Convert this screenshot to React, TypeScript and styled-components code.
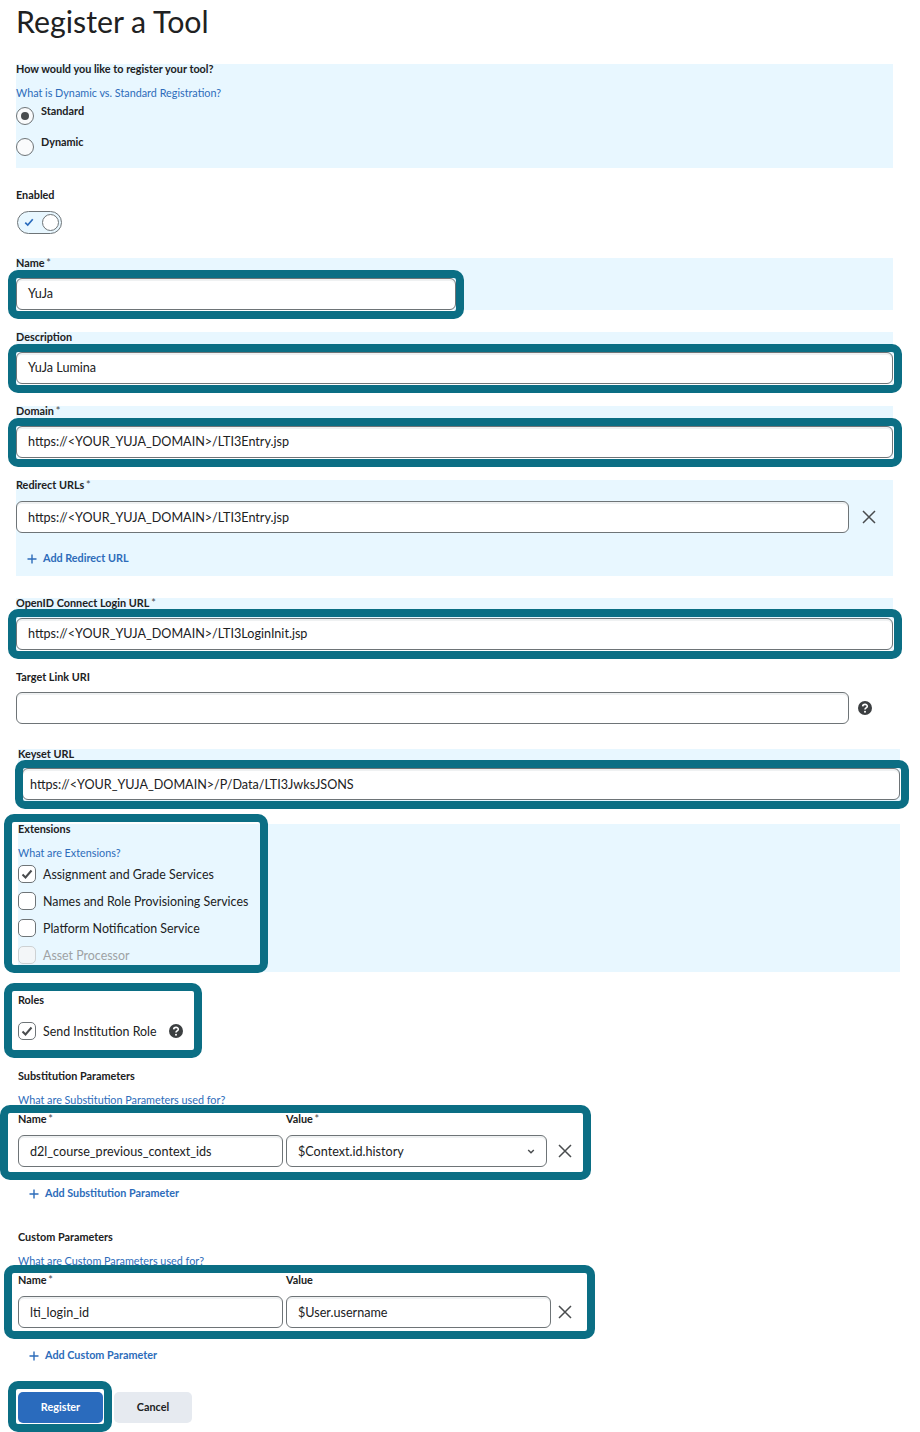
import { ReactNode } from 'react'
import styled, { createGlobalStyle, css } from 'styled-components'

const GlobalStyle = createGlobalStyle`
  body {
    margin: 0;
    background: #fff;
    font-family: Lato, "Open Sans", sans-serif;
    color: #202122;
  }
`

const Page = styled.main`
  width: 920px;
  height: 1432px;
  padding-left: 16px;
  box-sizing: border-box;
  overflow: hidden;
`

const Title = styled.h1`
  margin: 0 0 22px;
  font-size: 30.3px;
  font-weight: 400;
  line-height: 42px;
`

const Block = styled.section<{ $top: number; $height?: number; $tint?: boolean; $wide?: boolean }>`
  margin-top: ${(p) => p.$top}px;
  margin-left: ${(p) => (p.$wide ? 2 : 0)}px;
  width: ${(p) => (p.$wide ? 882 : 877)}px;
  height: ${(p) => (p.$height ? `${p.$height}px` : 'auto')};
  background: ${(p) => (p.$tint ? '#e8f7ff' : 'transparent')};
`

const Label = styled.div`
  padding-bottom: 2px;
  font-size: 10.85px;
  font-weight: 700;
  line-height: 10px;
  color: #202122;
  white-space: nowrap;
`

const Star = styled.span`
  margin-left: -1px;
  font-weight: 400;
  color: #494c4e;
`

const HelpLink = styled.a<{ $top: number }>`
  display: block;
  margin-top: ${(p) => p.$top}px;
  font-size: 10.8px;
  line-height: 14px;
  color: #2d6cba;
  white-space: nowrap;
`

const RadioRow = styled.div<{ $top: number }>`
  display: flex;
  gap: 7px;
  margin-top: ${(p) => p.$top}px;
  height: 18px;
`

const RadioCircle = styled.span<{ $on?: boolean }>`
  display: flex;
  align-items: center;
  justify-content: center;
  margin-top: 1px;
  width: 18px;
  height: 18px;
  box-sizing: border-box;
  border: 1px solid #6e7477;
  border-radius: 50%;
  background: #fafbfc;

  &::after {
    content: '';
    display: ${(p) => (p.$on ? 'block' : 'none')};
    width: 8px;
    height: 8px;
    border-radius: 50%;
    background: #494c4e;
  }
`

const Toggle = styled.div`
  display: flex;
  align-items: center;
  justify-content: space-between;
  margin: 9px 0 0 1px;
  padding: 0 2px 0 6px;
  width: 45px;
  height: 23px;
  box-sizing: border-box;
  border: 1px solid #6e7477;
  border-radius: 12px;
  background: #e8f7ff;
`

const Knob = styled.span`
  width: 17px;
  height: 17px;
  box-sizing: border-box;
  border: 1px solid #6e7477;
  border-radius: 50%;
  background: #fff;
`

// the teal annotation frame drawn over a part of the form
const frame = css<{ $inset: string }>`
  position: relative;

  &::after {
    content: '';
    position: absolute;
    inset: ${(p) => p.$inset};
    border: 8px solid #0b6e84;
    border-radius: 10px;
    pointer-events: none;
  }
`

const FieldRow = styled.div<{ $top?: number; $left?: number }>`
  display: flex;
  align-items: center;
  width: max-content;
  margin-top: ${(p) => p.$top ?? 8}px;
  margin-left: ${(p) => p.$left ?? 0}px;
`

const FramedRow = styled(FieldRow)<{ $inset: string }>`
  ${frame}
`

const FramedPanel = styled.div<{ $inset: string; $width: number; $height: number }>`
  ${frame}
  width: ${(p) => p.$width}px;
  height: ${(p) => p.$height}px;
`

const TextBox = styled.div<{ $width: number; $pad?: number; $raised?: boolean }>`
  display: flex;
  align-items: center;
  justify-content: space-between;
  flex: none;
  width: ${(p) => p.$width}px;
  height: 32px;
  padding: 0 11px ${(p) => (p.$raised ? 1 : 0)}px ${(p) => p.$pad ?? 11}px;
  box-sizing: border-box;
  border: 1px solid #6e7477;
  border-radius: 6px;
  background: #fff;
  box-shadow: inset 0 2px 0 0 rgba(177, 185, 190, 0.2);
  font-size: 12.6px;
  color: #202122;
  white-space: nowrap;
`

const IconSlot = styled.span<{ $width: number }>`
  display: flex;
  align-items: center;
  justify-content: center;
  flex: none;
  width: ${(p) => p.$width}px;
`

const AddButton = styled.a<{ $top: number }>`
  display: flex;
  align-items: center;
  gap: 6px;
  margin-top: ${(p) => p.$top}px;
  margin-left: 11px;
  font-size: 10.8px;
  font-weight: 700;
  line-height: 14px;
  color: #2d6cba;

  svg {
    margin-top: 2px;
  }
`

const CheckRow = styled.div<{ $top: number; $muted?: boolean }>`
  display: flex;
  align-items: center;
  gap: 7px;
  margin-top: ${(p) => p.$top}px;
  height: 18px;
  font-size: 12.4px;
  color: ${(p) => (p.$muted ? '#9ea2a4' : '#202122')};
  white-space: nowrap;
`

const CheckBox = styled.span<{ $muted?: boolean }>`
  display: flex;
  align-items: center;
  justify-content: center;
  width: 18px;
  height: 18px;
  box-sizing: border-box;
  border: 1px solid ${(p) => (p.$muted ? '#cdd1d3' : '#6e7477')};
  border-radius: 5px;
  background: ${(p) => (p.$muted ? '#f3f6f8' : '#fff')};
`

const ParamGrid = styled.div<{ $inset: string; $value: number; $remove: number }>`
  ${frame}
  display: grid;
  grid-template-columns: 265px ${(p) => p.$value}px ${(p) => p.$remove}px;
  column-gap: 3px;
  row-gap: 9px;
  align-items: center;
  margin-top: 7px;
  width: max-content;
`

const Actions = styled.div`
  display: flex;
  gap: 11px;
  margin: 30px 0 0 2px;
`

const ActionButton = styled.button<{ $primary?: boolean }>`
  width: ${(p) => (p.$primary ? 85 : 78)}px;
  height: 31px;
  padding: 0 0 3px;
  border: 0;
  border-radius: 5px;
  background: ${(p) => (p.$primary ? '#2a6bbd' : '#e6eaf0')};
  color: ${(p) => (p.$primary ? '#fff' : '#202122')};
  font-family: inherit;
  font-size: 10.8px;
  font-weight: 700;
`

const FramedAction = styled.div<{ $inset: string }>`
  ${frame}
  display: flex;
`

function CloseIcon() {
  return (
    <svg width="14" height="14" viewBox="0 0 14 14" fill="none" stroke="#494c4e" strokeWidth="1.5">
      <path d="M1 1 L13 13 M13 1 L1 13" />
    </svg>
  )
}

function HelpIcon() {
  return (
    <svg width="14" height="14" viewBox="0 0 14 14">
      <circle cx="7" cy="7" r="7" fill="#3c3f41" />
      <path d="M4.7 5.4 C4.8 2.7 9.3 2.7 9.3 5.3 C9.3 6.9 7 6.9 7 8.5" fill="none" stroke="#fff" strokeWidth="1.6" />
      <circle cx="7" cy="10.8" r="1" fill="#fff" />
    </svg>
  )
}

function PlusIcon() {
  return (
    <svg width="10" height="10" viewBox="0 0 10 10" stroke="#2d6cba" strokeWidth="1.4">
      <path d="M5 0.5 V9.5 M0.5 5 H9.5" />
    </svg>
  )
}

function CheckMark({ color = '#494c4e', size = 12 }: { color?: string; size?: number }) {
  return (
    <svg width={size} height={(size * 10) / 12} viewBox="0 0 12 10" fill="none" stroke={color} strokeWidth="2">
      <path d="M1.5 5.5 L4.5 8.5 L10.5 1.5" />
    </svg>
  )
}

function Chevron() {
  return (
    <svg width="8" height="5" viewBox="0 0 10 6" fill="none" stroke="#494c4e" strokeWidth="1.8">
      <path d="M1.5 1 L5 4.5 L8.5 1" />
    </svg>
  )
}

function Check({ top, on, muted, children }: { top: number; on?: boolean; muted?: boolean; children: ReactNode }) {
  return (
    <CheckRow $top={top} $muted={muted}>
      <CheckBox $muted={muted}>{on && <CheckMark />}</CheckBox>
      {children}
    </CheckRow>
  )
}

const required = <Star> *</Star>

export default function App() {
  return (
    <Page>
      <GlobalStyle />
      <Title>Register a Tool</Title>

      <Block $top={0} $height={104} $tint>
        <Label>How would you like to register your tool?</Label>
        <HelpLink $top={10}>What is Dynamic vs. Standard Registration?</HelpLink>
        <RadioRow $top={6}>
          <RadioCircle $on />
          <Label>Standard</Label>
        </RadioRow>
        <RadioRow $top={13}>
          <RadioCircle />
          <Label>Dynamic</Label>
        </RadioRow>
      </Block>

      <Block $top={22}>
        <Label>Enabled</Label>
        <Toggle>
          <CheckMark color="#2a6bbd" size={10} />
          <Knob />
        </Toggle>
      </Block>

      <Block $top={24} $height={52} $tint>
        <Label>Name{required}</Label>
        <FramedRow $inset="-8px -8px -9px -8px">
          <TextBox $width={440} $raised>
            YuJa
          </TextBox>
        </FramedRow>
      </Block>

      <Block $top={22} $height={52} $tint>
        <Label>Description</Label>
        <FramedRow $inset="-8.5px -9px -8.5px -8px">
          <TextBox $width={877} $raised>
            YuJa Lumina
          </TextBox>
        </FramedRow>
      </Block>

      <Block $top={22} $height={52} $tint>
        <Label>Domain{required}</Label>
        <FramedRow $inset="-8.5px -9px -8.5px -8px">
          <TextBox $width={877} $raised>
            {'https://<YOUR_YUJA_DOMAIN>/LTI3Entry.jsp'}
          </TextBox>
        </FramedRow>
      </Block>

      <Block $top={22} $height={96} $tint>
        <Label>Redirect URLs{required}</Label>
        <FieldRow $top={9}>
          <TextBox $width={833}>{'https://<YOUR_YUJA_DOMAIN>/LTI3Entry.jsp'}</TextBox>
          <IconSlot $width={39}>
            <CloseIcon />
          </IconSlot>
        </FieldRow>
        <AddButton $top={18}>
          <PlusIcon />
          Add Redirect URL
        </AddButton>
      </Block>

      <Block $top={22} $height={52} $tint>
        <Label>OpenID Connect Login URL{required}</Label>
        <FramedRow $inset="-9px -9px -9px -8px">
          <TextBox $width={877} $raised>
            {'https://<YOUR_YUJA_DOMAIN>/LTI3LoginInit.jsp'}
          </TextBox>
        </FramedRow>
      </Block>

      <Block $top={22}>
        <Label>Target Link URI</Label>
        <FieldRow>
          <TextBox $width={833} />
          <IconSlot $width={32}>
            <HelpIcon />
          </IconSlot>
        </FieldRow>
      </Block>

      <Block $top={25} $height={52} $tint $wide>
        <Label>Keyset URL</Label>
        <FramedRow $top={7} $left={4} $inset="-8px -9px -9px -7px">
          <TextBox $width={878} $pad={7}>
            {'https://<YOUR_YUJA_DOMAIN>/P/Data/LTI3JwksJSONS'}
          </TextBox>
        </FramedRow>
      </Block>

      <Block $top={23} $height={148} $tint $wide>
        <FramedPanel $width={250} $height={148} $inset="-10px 0 -1px -14px">
          <Label>Extensions</Label>
          <HelpLink $top={10}>What are Extensions?</HelpLink>
          <Check top={5} on>
            Assignment and Grade Services
          </Check>
          <Check top={9}>Names and Role Provisioning Services</Check>
          <Check top={9}>Platform Notification Service</Check>
          <Check top={9} muted>
            Asset Processor
          </Check>
        </FramedPanel>
      </Block>

      <Block $top={23} $wide>
        <FramedPanel $width={180} $height={45} $inset="-12px -4px -18px -14px">
          <Label>Roles</Label>
          <Check top={15} on>
            Send Institution Role
            <IconSlot $width={25}>
              <HelpIcon />
            </IconSlot>
          </Check>
        </FramedPanel>
      </Block>

      <Block $top={31} $wide>
        <Label>Substitution Parameters</Label>
        <HelpLink $top={10}>What are Substitution Parameters used for?</HelpLink>
        <ParamGrid $value={261} $remove={30} $inset="-9px -11px -13px -18px">
          <Label>Name{required}</Label>
          <Label>Value{required}</Label>
          <span />
          <TextBox $width={265}>d2l_course_previous_context_ids</TextBox>
          <TextBox $width={261}>
            $Context.id.history
            <Chevron />
          </TextBox>
          <IconSlot $width={30}>
            <CloseIcon />
          </IconSlot>
        </ParamGrid>
        <AddButton $top={19}>
          <PlusIcon />
          Add Substitution Parameter
        </AddButton>
      </Block>

      <Block $top={32} $wide>
        <Label>Custom Parameters</Label>
        <HelpLink $top={10}>What are Custom Parameters used for?</HelpLink>
        <ParamGrid $value={265} $remove={22} $inset="-10px -19px -11px -14px">
          <Label>Name{required}</Label>
          <Label>Value</Label>
          <span />
          <TextBox $width={265}>lti_login_id</TextBox>
          <TextBox $width={265}>$User.username</TextBox>
          <IconSlot $width={22}>
            <CloseIcon />
          </IconSlot>
        </ParamGrid>
        <AddButton $top={20}>
          <PlusIcon />
          Add Custom Parameter
        </AddButton>
      </Block>

      <Actions>
        <FramedAction $inset="-11px -9px -9px -10px">
          <ActionButton $primary>Register</ActionButton>
        </FramedAction>
        <ActionButton>Cancel</ActionButton>
      </Actions>
    </Page>
  )
}
